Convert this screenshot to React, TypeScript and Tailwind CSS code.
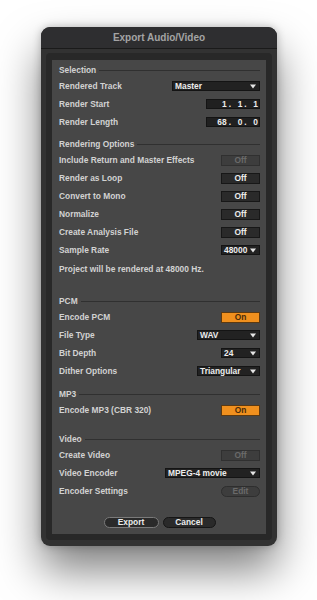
import type { ReactNode } from 'react';

const font = "font-['Liberation_Sans',Arial,sans-serif]";

function Header({ title, className = '' }: { title: string; className?: string }) {
  return (
    <div className={`h-[12px] flex items-center gap-[3px] pr-[6px] ${className}`}>
      <span>{title}</span>
      <div className="flex-1 h-px bg-[#303030]" />
    </div>
  );
}

function Row({ label, children }: { label: string; children: ReactNode }) {
  return (
    <div className="h-[18px] flex items-center justify-between pr-[6px]">
      <span>{label}</span>
      {children}
    </div>
  );
}

function Caret() {
  return (
    <svg width="6" height="5" viewBox="0 0 6 5" className="shrink-0">
      <polygon points="0,0.5 6,0.5 3,4.5" fill="#e6e6e6" />
    </svg>
  );
}

function Select({ value, width }: { value: string; width: string }) {
  return (
    <div
      className={`${width} h-[10px] bg-[#222222] border border-[#141414] flex items-center justify-between pl-[2px] pr-[3px] text-[#ececec] leading-none`}
    >
      <span>{value}</span>
      <Caret />
    </div>
  );
}

function Toggle({ on = false, disabled = false }: { on?: boolean; disabled?: boolean }) {
  const look = on
    ? 'bg-[#f0901e] border-[#5c3a12] text-[#4a2c0a]'
    : disabled
      ? 'bg-[#3d3d3d] border-[#303030] text-[#6a6a6a]'
      : 'bg-[#2a2a2a] border-[#171717] text-[#ececec]';
  return (
    <div className={`w-[39px] h-[11px] border flex items-center justify-center leading-none ${look}`}>
      {on ? 'On' : 'Off'}
    </div>
  );
}

// bars . beats . sixteenths
function BarField({ parts }: { parts: string[] }) {
  return (
    <div className="w-[54px] h-[10px] bg-[#202020] border border-[#141414] flex items-center justify-end pr-[1px] text-[#ececec] leading-none">
      {parts.map((p, i) => (
        <span key={i} className="flex">
          <span>{p}</span>
          {i < parts.length - 1 ? <span className="w-[11px] pl-[2px]">.</span> : null}
        </span>
      ))}
    </div>
  );
}

export default function App() {
  return (
    <div className={`min-h-screen bg-white pt-[27px] pl-[41px] ${font}`}>
      <div className="w-[236px] h-[519px] rounded-[9px] bg-[#323232] overflow-hidden shadow-[0_24px_44px_rgba(0,0,0,0.5),0_0_8px_rgba(0,0,0,0.25)]">
        <div className="h-[22px] bg-[#2e2e30] border-b border-[#1a1a1a] flex items-center justify-center text-[10px] font-bold text-[#a4a4a4]">
          Export Audio/Video
        </div>
        <div className="px-[5px] pt-[4px]">
          <div className="bg-[#282828] rounded-[4px] px-[6px] pt-[7px] pb-[6px]">
            <div className="h-[474px] bg-[#474747] pl-[7px] pt-[4px] text-[8.4px] font-bold text-[#d2d2d2]">
              <Header title="Selection" />
              <div className="mt-[1px]">
                <Row label="Rendered Track">
                  <Select value="Master" width="w-[88px]" />
                </Row>
                <Row label="Render Start">
                  <BarField parts={['1', '1', '1']} />
                </Row>
                <Row label="Render Length">
                  <BarField parts={['68', '0', '0']} />
                </Row>
              </div>

              <Header title="Rendering Options" className="mt-[7px]" />
              <div className="mt-[1px]">
                <Row label="Include Return and Master Effects">
                  <Toggle disabled />
                </Row>
                <Row label="Render as Loop">
                  <Toggle />
                </Row>
                <Row label="Convert to Mono">
                  <Toggle />
                </Row>
                <Row label="Normalize">
                  <Toggle />
                </Row>
                <Row label="Create Analysis File">
                  <Toggle />
                </Row>
                <Row label="Sample Rate">
                  <Select value="48000" width="w-[39px]" />
                </Row>
              </div>
              <div className="h-[12px] mt-[4px] flex items-center">Project will be rendered at 48000 Hz.</div>

              <Header title="PCM" className="mt-[20px]" />
              <div className="mt-[1px]">
                <Row label="Encode PCM">
                  <Toggle on />
                </Row>
                <Row label="File Type">
                  <Select value="WAV" width="w-[63px]" />
                </Row>
                <Row label="Bit Depth">
                  <Select value="24" width="w-[39px]" />
                </Row>
                <Row label="Dither Options">
                  <Select value="Triangular" width="w-[63px]" />
                </Row>
              </div>

              <Header title="MP3" className="mt-[8px]" />
              <div className="mt-[1px]">
                <Row label="Encode MP3 (CBR 320)">
                  <Toggle on />
                </Row>
              </div>

              <Header title="Video" className="mt-[14px]" />
              <div className="mt-[1px]">
                <Row label="Create Video">
                  <Toggle disabled />
                </Row>
                <Row label="Video Encoder">
                  <Select value="MPEG-4 movie" width="w-[95px]" />
                </Row>
                <Row label="Encoder Settings">
                  <div className="w-[39px] h-[11px] rounded-full bg-[#3d3d3d] border border-[#2e2e2e] text-[#6a6a6a] flex items-center justify-center leading-none">
                    Edit
                  </div>
                </Row>
              </div>

              <div className="mt-[17px] flex justify-center gap-[4px] pr-[6px] text-[#ececec]">
                <div className="w-[55px] h-[11px] rounded-full bg-[#2a2a2a] border border-[#7a7a7a] flex items-center justify-center leading-none">
                  Export
                </div>
                <div className="w-[53px] h-[11px] rounded-full bg-[#2a2a2a] border border-[#161616] flex items-center justify-center leading-none">
                  Cancel
                </div>
              </div>
            </div>
          </div>
        </div>
      </div>
    </div>
  );
}
